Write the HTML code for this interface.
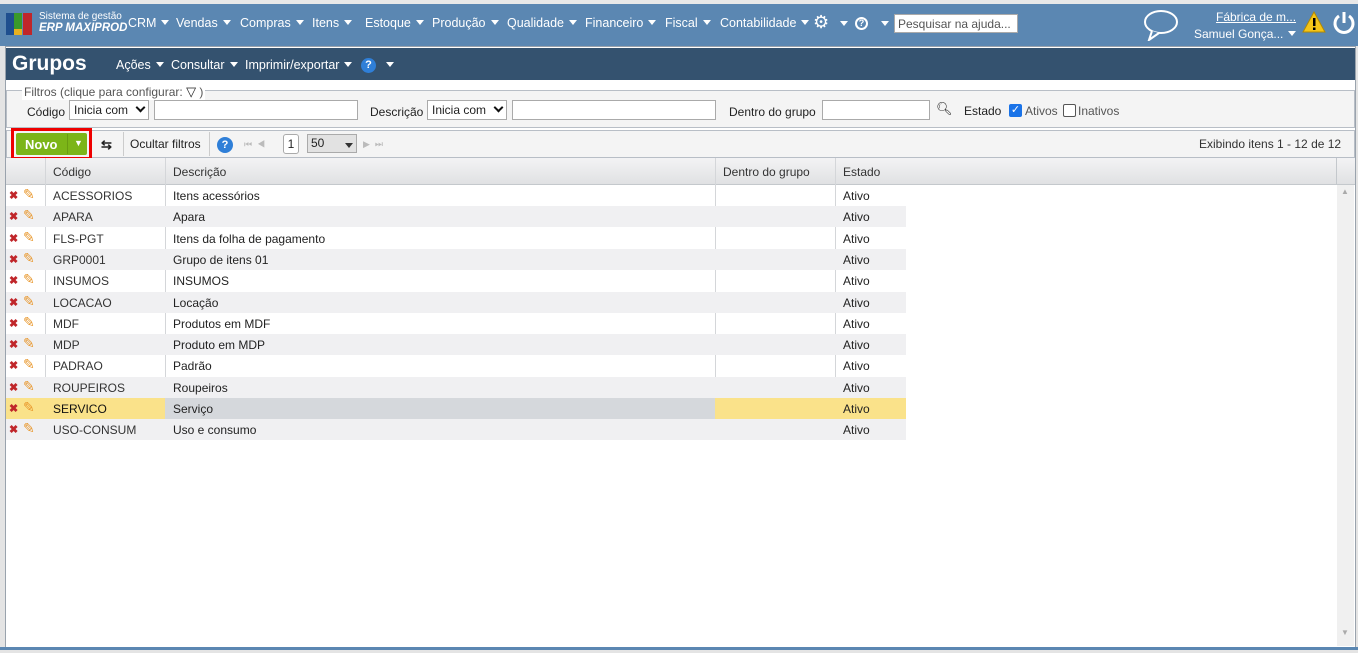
<!DOCTYPE html>
<html><head><meta charset="utf-8"><style>
*{box-sizing:border-box;margin:0;padding:0}
body{width:1358px;height:653px;overflow:hidden;background:#e4e4e4;font-family:"Liberation Sans",sans-serif;font-size:12px;color:#222;position:relative}
.a{position:absolute;white-space:nowrap}
.top{left:0;top:4px;width:1358px;height:42px;background:#5b87b2}
.nav{color:#fff;font-size:12.5px;top:16px}
.tri{display:inline-block;width:0;height:0;border-left:4px solid transparent;border-right:4px solid transparent;border-top:5px solid #fff;vertical-align:2px;margin-left:5px}
.trid{display:inline-block;width:0;height:0;border-left:4px solid transparent;border-right:4px solid transparent;border-top:5px solid #333;vertical-align:2px}
.panel{left:5px;top:46px;width:1351px;height:602px;background:#fff;border:1px solid #9aa3ad}
.inp{background:#fff;border:1px solid #aaa;height:20px}
.row{position:absolute;left:6px;height:21px;width:900px}
.row span{position:absolute;top:4px}
.g{background:#f0f0f2}
.chev{position:absolute;right:4px;top:5px;width:7px;height:7px;border-right:2px solid #111;border-bottom:2px solid #111;transform:rotate(45deg);top:3px}
</style></head><body>
<div class="a" style="left:0;top:0;width:1358px;height:4px;background:#e8e8e8"></div>
<div class="a top"></div>
<div class="a" style="left:6px;top:13px;width:8px;height:22px;background:#1f4f8f"></div>
<div class="a" style="left:14px;top:13px;width:8px;height:16px;background:#3a9a2a"></div>
<div class="a" style="left:14px;top:29px;width:8px;height:6px;background:#e8b020"></div>
<div class="a" style="left:23px;top:13px;width:9px;height:22px;background:#c0262a"></div>
<div class="a" style="left:39px;top:11px;color:#fff;font-size:10px">Sistema de gestão</div>
<div class="a" style="left:39px;top:22px;color:#fff;font-size:11.5px;font-style:italic;font-weight:bold">ERP MAXIPROD</div>
<div class="a nav" style="left:128px">CRM<i class="tri"></i></div>
<div class="a nav" style="left:176px">Vendas<i class="tri"></i></div>
<div class="a nav" style="left:240px">Compras<i class="tri"></i></div>
<div class="a nav" style="left:312px">Itens<i class="tri"></i></div>
<div class="a nav" style="left:365px">Estoque<i class="tri"></i></div>
<div class="a nav" style="left:432px">Produção<i class="tri"></i></div>
<div class="a nav" style="left:507px">Qualidade<i class="tri"></i></div>
<div class="a nav" style="left:585px">Financeiro<i class="tri"></i></div>
<div class="a nav" style="left:665px">Fiscal<i class="tri"></i></div>
<div class="a nav" style="left:720px">Contabilidade<i class="tri"></i></div>
<div class="a nav" style="left:813px;top:12px;font-size:18px">⚙</div><i class="a tri" style="left:835px;top:21px"></i>
<div class="a" style="left:855px;top:17px;width:13px;height:13px;border:2px solid #fff;border-radius:50%;color:#fff;font-size:9px;font-weight:bold;text-align:center;line-height:9px">?</div><i class="a tri" style="left:876px;top:21px"></i>
<div class="a inp" style="left:894px;top:14px;width:124px;height:19px;padding:2px 3px;color:#555;font-size:12px">Pesquisar na ajuda...</div>
<svg class="a" style="left:1142px;top:9px" width="38" height="32"><ellipse cx="19" cy="13" rx="16" ry="11" fill="none" stroke="#fff" stroke-width="2"/><path d="M10 22 L7 31 L17 24" fill="#5b87b2" stroke="#fff" stroke-width="2"/></svg>
<div class="a" style="left:1216px;top:10px;color:#fff;text-decoration:underline;font-size:12px">Fábrica de m...</div>
<div class="a" style="left:1194px;top:27px;color:#fff;font-size:12px">Samuel Gonça...<i class="tri"></i></div>
<svg class="a" style="left:1302px;top:11px" width="24" height="22"><path d="M12 1 L23 21 L1 21Z" fill="#f5c518" stroke="#b38a00"/><rect x="11" y="7" width="2.5" height="8" fill="#000"/><rect x="11" y="16.5" width="2.5" height="2.5" fill="#000"/></svg>
<svg class="a" style="left:1332px;top:10px" width="24" height="26"><path d="M7 6 A9 9 0 1 0 17 6" fill="none" stroke="#fff" stroke-width="3"/><line x1="12" y1="2" x2="12" y2="13" stroke="#fff" stroke-width="3"/></svg>

<div class="a panel"></div>
<div class="a" style="left:6px;top:48px;width:1349px;height:32px;background:#34526f"></div>
<div class="a" style="left:12px;top:52px;color:#fff;font-size:21px;font-weight:bold">Grupos</div>
<div class="a nav" style="left:116px;top:58px">Ações<i class="tri"></i></div>
<div class="a nav" style="left:171px;top:58px">Consultar<i class="tri"></i></div>
<div class="a nav" style="left:245px;top:58px">Imprimir/exportar<i class="tri"></i></div>
<div class="a" style="left:361px;top:58px;width:15px;height:15px;border-radius:50%;background:#2f7fd8;color:#fff;font-size:11px;font-weight:bold;text-align:center;line-height:15px">?</div>
<i class="a tri" style="left:381px;top:62px"></i>

<div class="a" style="left:6px;top:90px;width:1349px;height:38px;border:1px solid #b8bec6;background:#f4f4f4"></div>
<div class="a" style="left:22px;top:84px;background:#fff;padding:0 2px;color:#555;font-size:12px">Filtros (clique para configurar: <span style="font-size:13px;color:#222">▽</span> )</div>
<div class="a" style="left:27px;top:105px">Código</div>
<div class="a inp" style="left:69px;top:100px;width:80px;padding:2px 4px">Inicia com <i class="chev"></i></div>
<div class="a inp" style="left:154px;top:100px;width:204px"></div>
<div class="a" style="left:370px;top:105px">Descrição</div>
<div class="a inp" style="left:427px;top:100px;width:80px;padding:2px 4px">Inicia com <i class="chev"></i></div>
<div class="a inp" style="left:512px;top:100px;width:204px"></div>
<div class="a" style="left:729px;top:105px">Dentro do grupo</div>
<div class="a inp" style="left:822px;top:100px;width:108px"></div>
<div class="a" style="left:936px;top:101px;font-size:13px">🔍︎</div>
<div class="a" style="left:964px;top:104px">Estado</div>
<div class="a" style="left:1009px;top:104px;width:13px;height:13px;background:#1a73e8;border-radius:2px;color:#fff;font-size:11px;line-height:13px;text-align:center">✓</div>
<div class="a" style="left:1025px;top:104px;color:#555">Ativos</div>
<div class="a" style="left:1063px;top:104px;width:13px;height:13px;border:1px solid #555;border-radius:2px;background:#fff"></div>
<div class="a" style="left:1078px;top:104px;color:#555">Inativos</div>

<div class="a" style="left:6px;top:130px;width:1349px;height:28px;border:1px solid #b8bec6;background:#f4f4f4"></div>
<div class="a" style="left:11px;top:128px;width:81px;height:32px;border:3px solid #e00"></div>
<div class="a" style="left:16px;top:133px;width:71px;height:22px;background:#7cb518;border-radius:2px"></div>
<div class="a" style="left:25px;top:137px;color:#fff;font-weight:bold;font-size:13px">Novo</div>
<div class="a" style="left:67px;top:134px;width:1px;height:20px;background:#6a9c12"></div>
<div class="a" style="left:74px;top:138px;color:#fff;font-size:9px">▼</div>
<div class="a" style="left:101px;top:137px;font-size:13px;font-weight:bold">⇆</div>
<div class="a" style="left:123px;top:132px;width:1px;height:24px;background:#ccc"></div>
<div class="a" style="left:130px;top:137px">Ocultar filtros</div>
<div class="a" style="left:209px;top:132px;width:1px;height:24px;background:#ccc"></div>
<div class="a" style="left:217px;top:137px;width:16px;height:16px;border-radius:50%;background:#2f7fd8;color:#fff;font-size:11px;font-weight:bold;text-align:center;line-height:16px">?</div>
<div class="a" style="left:244px;top:139px;color:#bbb;font-size:9px">⏮ &nbsp;◀</div>
<div class="a" style="left:283px;top:134px;width:16px;height:20px;border:1px solid #aaa;border-radius:3px;background:#fff;text-align:center;line-height:18px">1</div>
<div class="a" style="left:307px;top:134px;width:50px;height:19px;border:1px solid #aaa;background:#e2e2e2;padding:1px 3px">50<span class="trid" style="position:absolute;right:3px;top:8px"></span></div>
<div class="a" style="left:363px;top:139px;color:#bbb;font-size:9px">▶ &nbsp;⏭</div>
<div class="a" style="left:1199px;top:137px;color:#333">Exibindo itens 1 - 12 de 12</div>

<div class="a" style="left:6px;top:158px;width:1349px;height:27px;background:linear-gradient(#f3f3f4,#e0e1e3);border-bottom:1px solid #c4c8cc"></div>
<div class="a" style="left:45px;top:158px;width:1px;height:282px;background:#d4d6d9"></div>
<div class="a" style="left:165px;top:158px;width:1px;height:282px;background:#d4d6d9"></div>
<div class="a" style="left:715px;top:158px;width:1px;height:282px;background:#d4d6d9"></div>
<div class="a" style="left:835px;top:158px;width:1px;height:282px;background:#d4d6d9"></div>
<div class="a" style="left:1336px;top:158px;width:1px;height:27px;background:#c4c8cc"></div>
<div class="a" style="left:53px;top:165px;color:#333">Código</div>
<div class="a" style="left:173px;top:165px;color:#333">Descrição</div>
<div class="a" style="left:723px;top:165px;color:#333">Dentro do grupo</div>
<div class="a" style="left:843px;top:165px;color:#333">Estado</div>
<div class="a" style="left:1337px;top:185px;width:17px;height:461px;background:#f0f0f0"></div>
<div class="a" style="left:1341px;top:187px;color:#aaa;font-size:8px">▲</div>
<div class="a" style="left:1341px;top:628px;color:#aaa;font-size:8px">▼</div>

<div id="rows"></div>
<script>
var d=[["ACESSORIOS","Itens acessórios"],["APARA","Apara"],["FLS-PGT","Itens da folha de pagamento"],["GRP0001","Grupo de itens 01"],["INSUMOS","INSUMOS"],["LOCACAO","Locação"],["MDF","Produtos em MDF"],["MDP","Produto em MDP"],["PADRAO","Padrão"],["ROUPEIROS","Roupeiros"],["SERVICO","Serviço"],["USO-CONSUM","Uso e consumo"]];
var h="";d.forEach(function(r,i){var top=185+i*21.3;var cls=i%2?"g":"";var sel=i==10;
h+='<div class="row '+cls+'" style="top:'+top+'px">';
if(sel)h+='<div style="position:absolute;left:0;top:0;width:159px;height:21px;background:#fae28a"></div><div style="position:absolute;left:159px;top:0;width:550px;height:21px;background:#d5d8dc"></div><div style="position:absolute;left:709px;top:0;width:191px;height:21px;background:#fae28a"></div>';
h+='<span style="left:3px;color:#c0262a;font-weight:bold;font-size:11px">✖</span><span style="left:17px;top:1px;color:#e8962a;font-size:14px">✎</span><span style="left:47px;color:'+(sel?'#111':'#333')+'">'+r[0]+'</span><span style="left:167px">'+r[1]+'</span><span style="left:837px">Ativo</span></div>';});
document.getElementById("rows").innerHTML=h;
</script>
<div class="a" style="left:0;top:647px;width:1358px;height:3px;background:#5b87b2"></div>
</body></html>
